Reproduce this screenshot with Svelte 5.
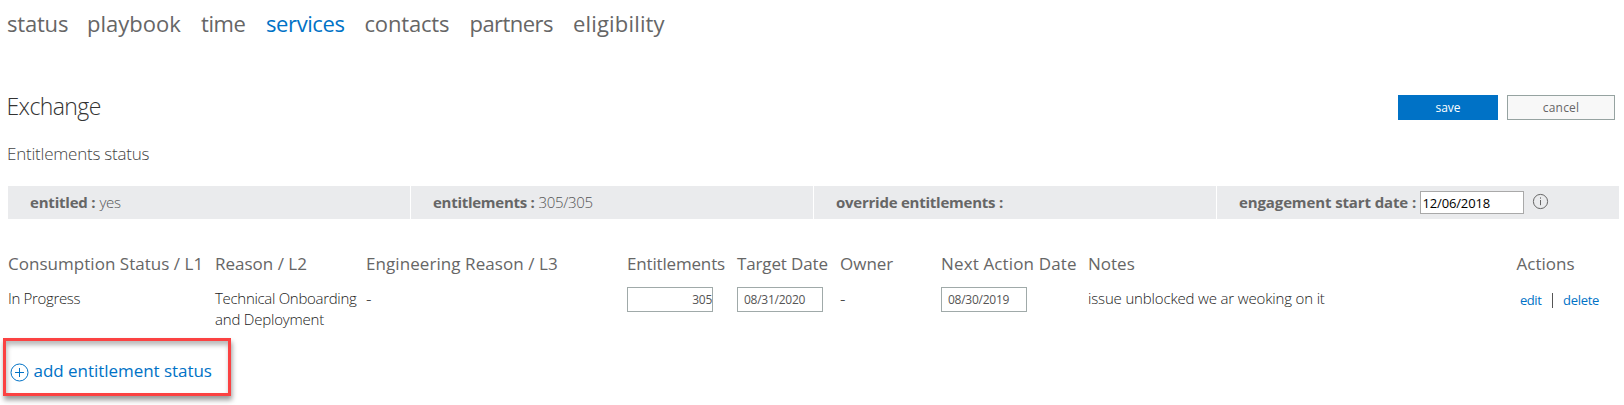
<script>
  const tabs = [
    { name: 'status', width: 80, track: -0.2 },
    { name: 'playbook', width: 114, track: 0 },
    { name: 'time', width: 65, track: -0.45 },
    { name: 'services', width: 98.5, track: -0.4 },
    { name: 'contacts', width: 105, track: -0.17 },
    { name: 'partners', width: 103.5, track: -0.55 },
    { name: 'eligibility', width: 100, track: 0.17 }
  ];
  const columns = [
    { name: 'Consumption Status / L1', track: 0.03 },
    { name: 'Reason / L2', track: 0 },
    { name: 'Engineering Reason / L3', track: 0.07 },
    { name: 'Entitlements', track: -0.17 },
    { name: 'Target Date', track: -0.14 },
    { name: 'Owner', track: 0 },
    { name: 'Next Action Date', track: 0.14 },
    { name: 'Notes', track: 0 },
    { name: 'Actions', track: 0 }
  ];
  let active = $state('services');
  let startDate = $state('12/06/2018');
  let count = $state('305');
  let targetDate = $state('08/31/2020');
  let nextDate = $state('08/30/2019');
</script>

<main>
  <nav>
    {#each tabs as tab}
      <button
        class="tab"
        class:active={active === tab.name}
        style="width: {tab.width}px; letter-spacing: {tab.track}px"
        onclick={() => (active = tab.name)}>{tab.name}</button>
    {/each}
  </nav>

  <header>
    <h1>Exchange</h1>
    <div class="buttons">
      <button class="save">save</button>
      <button class="cancel">cancel</button>
    </div>
  </header>
  <h2>Entitlements status</h2>

  <section class="summary">
    <div class="cell"><b class="entitled">entitled :</b><span class="yes">yes</span></div>
    <div class="cell"><b class="ents">entitlements :</b><span class="ratio">305/305</span></div>
    <div class="cell"><b class="override">override entitlements :</b></div>
    <div class="cell">
      <b class="start">engagement start date :</b>
      <input class="start-date" bind:value={startDate} />
      <svg class="info" width="17" height="17" viewBox="0 0 17 17" fill="none" stroke="#666">
        <circle cx="8.5" cy="8.5" r="7.1" />
        <path d="M8.5 7v5.2M8.5 4.4v1.3" />
      </svg>
    </div>
  </section>

  <section class="grid heads">
    {#each columns as col}
      <div style="letter-spacing: {col.track}px">{col.name}</div>
    {/each}
  </section>
  <section class="grid row">
    <div class="progress">In Progress</div>
    <div class="reason"><span class="line1">Technical Onboarding</span><br />and Deployment</div>
    <div class="dash">-</div>
    <div><input class="field count" bind:value={count} /></div>
    <div><input class="field" bind:value={targetDate} /></div>
    <div class="dash">-</div>
    <div><input class="field" bind:value={nextDate} /></div>
    <div class="notes">issue unblocked we ar weoking on it</div>
    <div class="actions"><a href="#edit" class="edit">edit</a><i></i><a href="#delete" class="delete">delete</a></div>
  </section>

  <div class="add">
    <svg width="19" height="19" viewBox="0 0 19 19" fill="none" stroke="#0072c6">
      <circle cx="9.5" cy="9.5" r="8.5" />
      <path d="M9.5 5v9M5 9.5h9" />
    </svg>
    <span>add entitlement status</span>
  </div>
</main>

<style>
  :global(body) { background: #fff; overflow: hidden; }
  main { font-family: "Open Sans", "Noto Sans", sans-serif; color: #666; height: 405px; }
  button, input { font-family: inherit; margin: 0; box-sizing: border-box; border-radius: 0; outline: 0; }
  nav { display: flex; padding: 8px 0 0 7px; height: 31px; }
  .tab { padding: 0; border: 0; background: none; text-align: left; color: #666; font-size: 22px; line-height: 31px; white-space: nowrap; }
  .tab.active { color: #0072c6; }
  header { display: flex; justify-content: space-between; padding: 52px 9px 0 6.5px; height: 47px; }
  h1, h2 { margin: 0; font-weight: 300; }
  h1 { font-size: 23px; line-height: 30px; color: #333; letter-spacing: -0.6px; }
  .buttons { display: flex; gap: 9px; padding-top: 4px; }
  .buttons button { height: 25px; padding: 0; font-size: 12px; line-height: 23px; }
  .save { width: 100px; border: 1px solid #0072c6; background: #0072c6; color: #fff; }
  .cancel { width: 108px; border: 1px solid #96a3a1; background: #f8f8f8; color: #666; letter-spacing: 0.2px; }
  h2 { padding: 3px 0 0 7px; height: 45px; font-size: 17px; line-height: 25px; color: #444; letter-spacing: -0.22px; }
  .summary { display: grid; grid-template-columns: 402px 402px 402px 402px; gap: 1px; margin-left: 8px; width: 1611px; height: 33px; }
  .cell { display: flex; align-items: center; padding-left: 22px; background: #eaebed; font-size: 15px; line-height: 33px; white-space: nowrap; }
  .cell span { font-weight: 300; margin-left: 4px; color: #555; }
  .entitled { letter-spacing: -0.2px; }
  .yes { letter-spacing: -0.3px; }
  .ents { letter-spacing: -0.27px; }
  .ratio { letter-spacing: -0.35px; }
  .override { letter-spacing: -0.24px; }
  .start { width: 180.5px; letter-spacing: -0.12px; }
  .start-date { width: 104px; height: 23px; padding: 0 0 0 2px; border: 1px solid #a9a9a9; background: #fff; color: #000; font-size: 13px; letter-spacing: -0.15px; }
  .info { margin: -2px 0 0 8.5px; }
  .grid { display: grid; grid-template-columns: 207px 151px 261px 110px 103px 101px 147px 428.5px 1fr; padding-left: 8px; }
  .heads { padding-top: 32px; height: 36px; font-size: 17px; line-height: 25px; white-space: nowrap; }
  .row { height: 51px; font-size: 15px; line-height: 21px; font-weight: 300; color: #222; white-space: nowrap; }
  .row > div { padding-top: 1px; }
  .progress { letter-spacing: -0.33px; }
  .reason { letter-spacing: -0.2px; }
  .line1 { letter-spacing: -0.3px; }
  .notes { letter-spacing: -0.16px; }
  .dash { font-size: 17px; }
  .field { display: block; width: 86px; height: 25px; margin-top: -1px; padding: 0 0 0 6px; border: 1px solid #a0aaa9; background: #fff; color: #555; font-size: 12px; letter-spacing: -0.25px; }
  .count { text-align: right; padding: 0; }
  .row > .actions { display: flex; align-items: center; height: 25px; font-weight: 400; font-size: 13px; padding-left: 3.5px; }
  .actions a { color: #0072c6; text-decoration: none; }
  .edit { width: 32px; letter-spacing: -0.45px; }
  .delete { letter-spacing: -0.3px; }
  .actions i { width: 1px; height: 15px; margin: 0 10px 0 0; background: #555; }
  .add { display: flex; align-items: center; box-sizing: border-box; width: 228px; height: 58px; margin-left: 3px; padding: 8px 0 0 4.5px; border: 3px solid #fb4242; box-shadow: 1px 4px 5px rgba(0, 0, 0, 0.4), inset 1px 4px 5px rgba(0, 0, 0, 0.28); color: #0072c6; font-size: 17px; white-space: nowrap; }
  .add svg { margin: 2px 0 0 -0.5px; }
  .add span { margin-left: 4.5px; line-height: 24px; letter-spacing: -0.04px; }
</style>
